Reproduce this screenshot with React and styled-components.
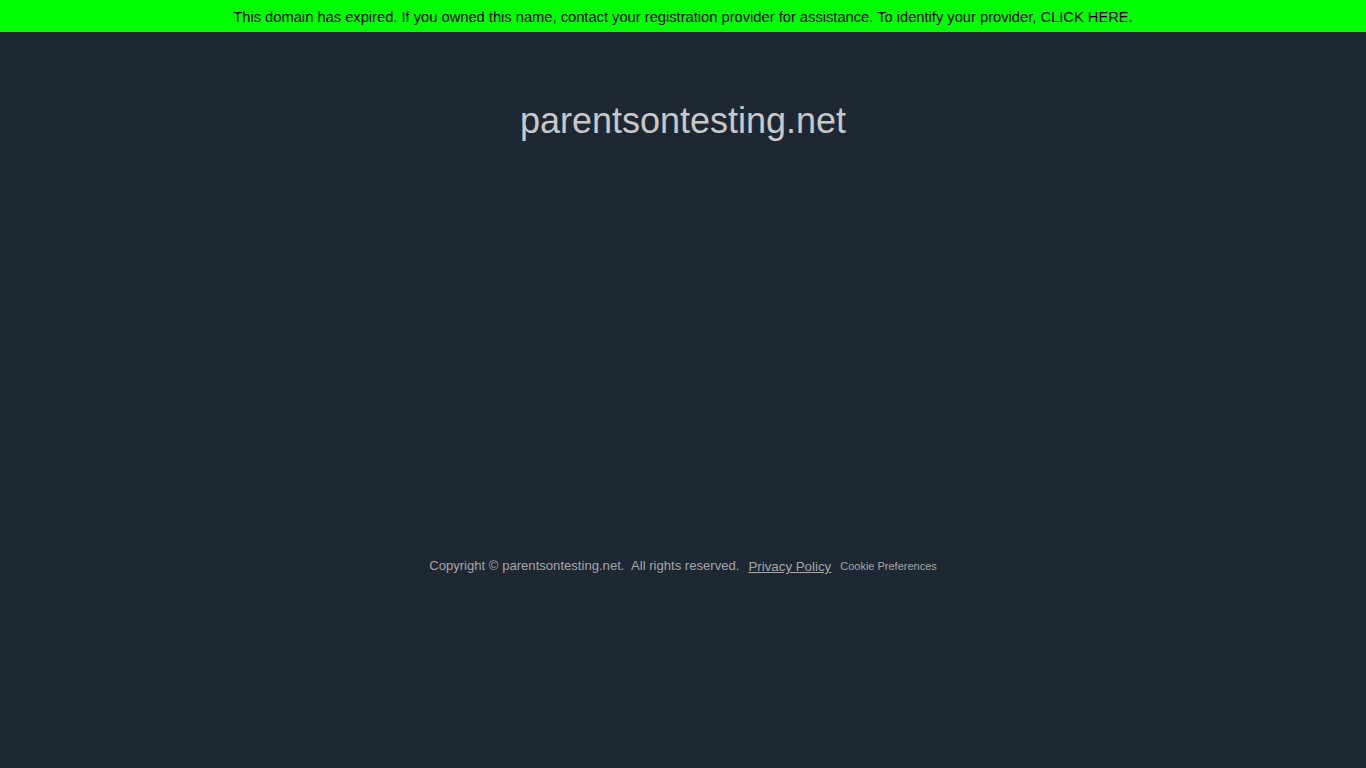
import React from 'react'
import styled, { createGlobalStyle } from 'styled-components'

const Global = createGlobalStyle`
  html, body {
    margin: 0;
    padding: 0;
    background: #1e2833;
    font-family: Arial, "Liberation Sans", sans-serif;
  }
`;

const Banner = styled.div`
  height: 32px;
  background: #00ff00;
  color: #000;
  font-size: 14.7px;
  line-height: 35px;
  text-align: center;
  a { color: #000; text-decoration: none; }
`;

const Page = styled.main`
  min-height: 736px;
  display: flex;
  flex-direction: column;
  align-items: center;
`;

const Title = styled.h1`
  margin: 0;
  padding-top: 68px;
  font-size: 36px;
  font-weight: normal;
  line-height: 42px;
  color: #c8c8c8;
`;

const Footer = styled.footer`
  margin-top: 416px;
  display: flex;
  align-items: baseline;
  gap: 9px;
  color: #a6a6a6;
  font-size: 13.1px;
`;

const FooterLink = styled.a`
  color: #a6a6a6;
  font-size: ${p => p.small ? '11px' : '13.3px'};
  text-decoration: ${p => p.small ? 'none' : 'underline'};
  position: relative;
  top: ${p => p.small ? '0' : '1px'};
`;

export default function App() {
  return (
    <>
      <Global />
      <Banner>
        This domain has expired. If you owned this name, contact your registration provider for assistance. To identify your provider, <a href="#">CLICK HERE</a>.
      </Banner>
      <Page>
        <Title>parentsontesting.net</Title>
        <Footer>
          <span>Copyright © parentsontesting.net.&nbsp; All rights reserved.</span>
          <FooterLink href="#">Privacy Policy</FooterLink>
          <FooterLink href="#" small>Cookie Preferences</FooterLink>
        </Footer>
      </Page>
    </>
  )
}
